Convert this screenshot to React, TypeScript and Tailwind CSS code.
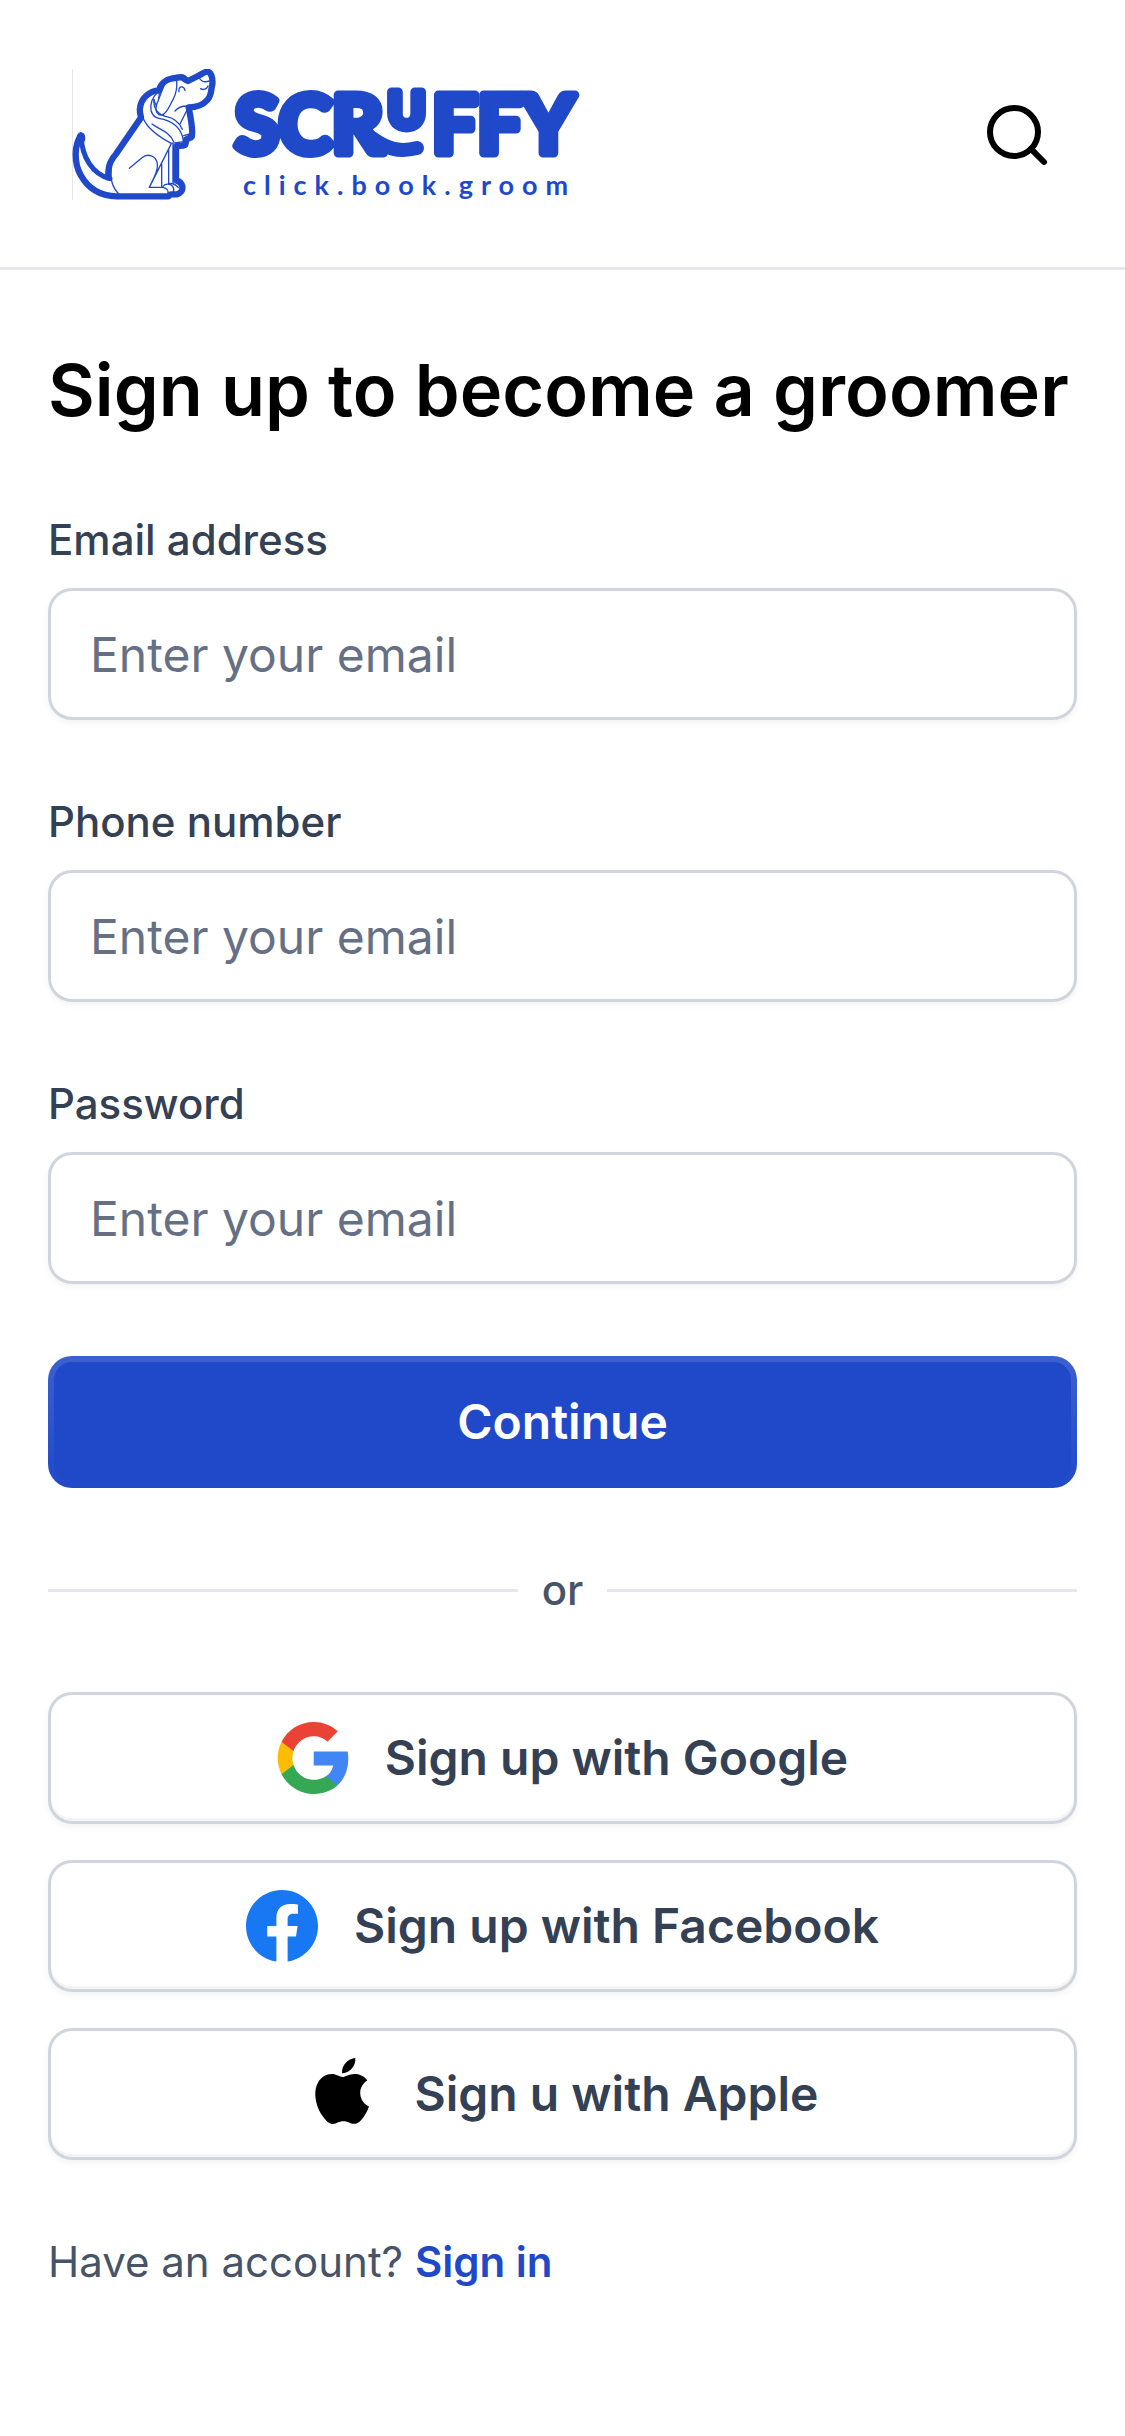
import type { ReactNode } from "react";

function Logo() {
  return (
    <svg
      className="h-[132px] w-[510px]"
      viewBox="72 69 510 132"
      role="img"
      aria-label="Scruffy click.book.groom"
    >
      <path d="M72.5 69V200" stroke="#e6e6e6" />
      <g
        transform="translate(60 50) scale(0.33333)"
        fill="none"
        stroke="#2049c9"
        strokeLinecap="round"
        strokeLinejoin="round"
      >
        {/* Silhouette */}
        <path
          strokeWidth="19"
          d="M63 257C44 282 40 335 62 375C86 419 126 438 170 439H325L332 433H350C362 430 369 420 367 409C364 397 357 393 348 391V289C354 285 366 290 376 284L379 268L395 261C401 244 392 205 386 172C408 172 428 166 442 150C455 137 452 122 457 104C459 84 454 66 441 65C433 66 424 73 414 78L384 93L376 89C368 77 352 83 334 86C318 88 302 101 297 121C268 122 243 146 240 174C238 185 242 195 243 203L168 312C154 328 147 342 146 358L144 382"
        />
        <path strokeWidth="15" d="M64 260C65 320 98 374 150 386" />
        <path strokeWidth="25" d="M63 260V268" />
        {/* Body and haunch */}
        <g strokeWidth="4">
          <path d="M154 348C150 378 155 411 176 431" />
          <path d="M208 355L246 323C263 309 288 317 292 340C294 357 288 373 268 412L334 281" />
          <path d="M268 412H307C320 414 326 420 324 431" />
          <path d="M305 342V411M326 299V401M339 283V401" />
          <path d="M309 409C316 400 330 401 338 409C343 415 342 421 340 428" />
          <path d="M326 401C336 399 347 403 355 413" />
        </g>
        {/* Scarf */}
        <g strokeWidth="4">
          <path d="M249 203C262 238 300 262 334 280L371 275" />
          <path d="M297 123C278 139 269 162 273 181C278 202 292 205 311 208C337 216 366 234 370 273" />
          <path d="M282 149C279 174 294 195 320 200C344 205 360 222 367 238" />
          <path d="M276 222C297 238 328 244 341 275" />
          <path d="M381 180L360 222M371 257L389 252M373 263L391 261" />
        </g>
        {/* Head, ear and face */}
        <g strokeWidth="4">
          <path d="M315 99L289 166C285 188 295 197 306 195C322 190 329 165 339 149C349 130 352 111 350 92" />
          <path d="M282 149C284 158 287 164 290 168M297 123C299 134 298 139 296 145" />
          <path d="M357 125C355 108 371 105 375 121M345 183C353 173 366 167 385 168" />
          <path d="M418 84C424 95 436 98 450 92M422 116C429 121 440 118 444 108" />
        </g>
      </g>
      {/* Wordmark */}
      <g
        className="fill-[#2049c9] stroke-[#2049c9]"
        strokeLinejoin="round"
        strokeLinecap="round"
        fontFamily="'Lato', sans-serif"
        fontWeight="700"
      >
        <text y="153" fontSize="80" strokeWidth="9">
          <tspan x="235">SCR</tspan>
          <tspan x="388" y="128" fontSize="50">
            U
          </tspan>
          <tspan x="432" y="153">
            FFY
          </tspan>
        </text>
        <path
          d="M372 138C386 148 398 153 417 148"
          fill="none"
          strokeWidth="14"
        />
      </g>
      <text
        x="243"
        y="195"
        fontSize="27"
        fontWeight="700"
        className="fill-[#2049c9] font-['Lato',sans-serif] tracking-[8px]"
      >
        click.book.groom
      </text>
    </svg>
  );
}

function SearchIcon() {
  return (
    <svg
      className="size-[72px]"
      viewBox="0 0 24 24"
      fill="none"
      stroke="black"
      strokeWidth="2"
      strokeLinecap="round"
      aria-hidden="true"
    >
      <circle cx="11" cy="11" r="8" />
      <path d="M21 21l-4.35-4.35" />
    </svg>
  );
}

function GoogleIcon() {
  return (
    <svg className="size-[72px]" viewBox="0 0 24 24" aria-hidden="true">
      <path
        fill="#4285F4"
        d="M23.766 12.2764C23.766 11.4607 23.6999 10.6406 23.5588 9.83807H12.24V14.4591H18.7217C18.4528 15.9494 17.5885 17.2678 16.323 18.1056V21.1039H20.19C22.4608 19.0139 23.766 15.9274 23.766 12.2764Z"
      />
      <path
        fill="#34A853"
        d="M12.2401 24.0008C15.4766 24.0008 18.2059 22.9382 20.1945 21.1039L16.3276 18.1055C15.2517 18.8375 13.8627 19.252 12.2445 19.252C9.11388 19.252 6.45946 17.1399 5.50705 14.3003H1.5166V17.3912C3.55371 21.4434 7.7029 24.0008 12.2401 24.0008Z"
      />
      <path
        fill="#FBBC04"
        d="M5.50253 14.3003C4.99987 12.8099 4.99987 11.1961 5.50253 9.70575V6.61481H1.51649C-0.18551 10.0056 -0.18551 14.0004 1.51649 17.3912L5.50253 14.3003Z"
      />
      <path
        fill="#EA4335"
        d="M12.2401 4.74966C13.9509 4.7232 15.6044 5.36697 16.8434 6.54867L20.2695 3.12262C18.1001 1.0855 15.2208 -0.034466 12.2401 0.000808666C7.7029 0.000808666 3.55371 2.55822 1.5166 6.61481L5.50264 9.70575C6.45064 6.86173 9.10947 4.74966 12.2401 4.74966Z"
      />
    </svg>
  );
}

function FacebookIcon() {
  return (
    <svg className="size-[72px]" viewBox="0 0 24 24" aria-hidden="true">
      <path
        fill="#1877F2"
        d="M24 12c0-6.627-5.373-12-12-12S0 5.373 0 12c0 5.99 4.388 10.954 10.125 11.854V15.47H7.078V12h3.047V9.356c0-3.007 1.792-4.668 4.533-4.668 1.312 0 2.686.234 2.686.234v2.953H15.83c-1.491 0-1.956.925-1.956 1.874V12h3.328l-.532 3.469h-2.796v8.385C19.612 22.954 24 17.99 24 12z"
      />
    </svg>
  );
}

function AppleIcon() {
  return (
    <svg className="size-[72px]" viewBox="-0.8 0 26.2 26.2" aria-hidden="true">
      <path d="M12.152 6.896c-.948 0-2.415-1.078-3.96-1.04-2.04.027-3.91 1.183-4.961 3.014-2.117 3.675-.546 9.103 1.519 12.09 1.013 1.454 2.208 3.09 3.792 3.039 1.52-.065 2.09-.987 3.935-.987 1.831 0 2.35.987 3.96.948 1.637-.026 2.676-1.48 3.676-2.948 1.156-1.688 1.636-3.325 1.662-3.415-.039-.013-3.182-1.221-3.22-4.857-.026-3.04 2.48-4.494 2.597-4.559-1.429-2.09-3.623-2.324-4.39-2.376-2-.156-3.675 1.09-4.61 1.09zM15.53 3.83c.843-1.012 1.4-2.427 1.245-3.83-1.207.052-2.662.805-3.532 1.818-.78.896-1.454 2.338-1.273 3.714 1.338.104 2.715-.688 3.559-1.701" />
    </svg>
  );
}

function Field({ id, label, type }: { id: string; label: string; type: string }) {
  return (
    <div className="flex flex-col gap-[18px]">
      <label htmlFor={id} className="text-[42px] leading-[60px] font-medium text-[#344054]">
        {label}
      </label>
      <input
        id={id}
        type={type}
        placeholder="Enter your email"
        className="h-[132px] w-full rounded-3xl border-[3px] border-[#d0d5dd] bg-white px-[39px] text-[48px] text-[#101828] shadow-[0_3px_6px_rgba(16,24,40,0.05)] placeholder:text-[#667085]"
      />
    </div>
  );
}

function SocialButton({ icon, children }: { icon: ReactNode; children: ReactNode }) {
  return (
    <button
      type="button"
      className="flex h-[132px] w-full items-center justify-center gap-9 rounded-3xl border-[3px] border-[#d0d5dd] bg-white text-[48px] leading-[72px] font-semibold text-[#344054] shadow-[0_3px_6px_rgba(16,24,40,0.05),inset_0_-3px_0_rgba(16,24,40,0.05)]"
    >
      {icon}
      <span>{children}</span>
    </button>
  );
}

export default function App() {
  return (
    <div className="min-h-screen bg-white font-['Inter',sans-serif]">
      <header className="flex items-center justify-between border-b-[3px] border-[#e4e7ec] px-[72px] pt-[69px] pb-[66px]">
        <Logo />
        <button type="button" aria-label="Search">
          <SearchIcon />
        </button>
      </header>
      <main className="px-12 py-[72px]">
        <form className="flex flex-col gap-[72px]">
          <h1 className="text-[72px] leading-[96px] font-semibold text-black">
            Sign up to become a groomer
          </h1>
          <Field id="email" label="Email address" type="email" />
          <Field id="phone" label="Phone number" type="tel" />
          <Field id="password" label="Password" type="password" />
          <button
            type="button"
            className="h-[132px] w-full rounded-3xl bg-linear-to-b from-[#3b60d0] to-[#2049c9] p-[6px] text-[48px] leading-[72px] font-semibold text-white"
          >
            <span className="flex h-full items-center justify-center rounded-[18px] bg-[#2049c9]">
              Continue
            </span>
          </button>
          <div className="flex items-center gap-6 text-[42px] leading-[60px] font-medium text-[#475467]">
            <span className="h-[3px] flex-1 bg-[#e4e7ec]" />
            <span>or</span>
            <span className="h-[3px] flex-1 bg-[#e4e7ec]" />
          </div>
          <div className="flex flex-col gap-9">
            <SocialButton icon={<GoogleIcon />}>Sign up with Google</SocialButton>
            <SocialButton icon={<FacebookIcon />}>Sign up with Facebook</SocialButton>
            <SocialButton icon={<AppleIcon />}>Sign u with Apple</SocialButton>
          </div>
          <p className="text-[42px] leading-[60px] text-[#475467]">
            Have an account?{" "}
            <a href="#" className="font-semibold text-[#2049c9]">
              Sign in
            </a>
          </p>
        </form>
      </main>
    </div>
  );
}
